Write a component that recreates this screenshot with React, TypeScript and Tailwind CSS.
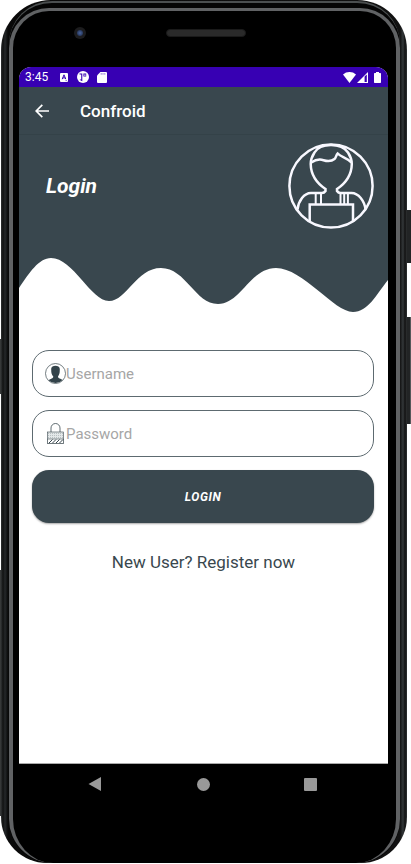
import React from "react";

function StatusBar() {
  return (
    <div className="flex h-5 items-center justify-between bg-[#3700b3] px-[6px] text-white">
      <div className="flex items-center">
        <span className="w-[35px] text-[12px] leading-5">3:45</span>
        <svg className="h-[9px] w-[8px]" viewBox="0 0 8 9" aria-hidden="true">
          <rect width="8" height="9" rx="1" fill="#fff" />
          <path d="M2.2 6.2 4 1.8l1.8 4.4M2.8 4.9h2.4" fill="none" stroke="#3700b3" strokeWidth="1" />
          <path d="M5.6 7.6h1.2" stroke="#3700b3" strokeWidth=".7" />
        </svg>
        <svg className="ml-[9px] size-3" viewBox="0 0 12 12" aria-hidden="true">
          <circle cx="6" cy="6" r="6" fill="#fff" />
          <path d="M2.500 2.600H5.300V10.200A4.600 4.600 0 0 1 2.500 8ZM6.400 2.600H9.200V5.600H6.400Z" fill="#3700b3" />
          <path d="M2 3.500h2.200v5H2z" fill="#fff" />
          <path d="M7.300 3.400h1.200v1.400H7.300z" fill="#fff" />
        </svg>
        <svg className="ml-2 h-[11px] w-[10px]" viewBox="0 0 10 11" aria-hidden="true">
          <path d="M3.4 0H9a1 1 0 0 1 1 1v9a1 1 0 0 1-1 1H1a1 1 0 0 1-1-1V3.4z" fill="#fff" />
          <path d="M4.2 1.2v1.4M6 1.2v1.4M7.8 1.2v1.4" stroke="#3700b3" strokeWidth=".6" />
        </svg>
      </div>
      <div className="flex items-center pr-px">
        <svg className="h-[11px] w-[13px]" viewBox="0 0 13 11" aria-hidden="true">
          <path d="M0 2.4a10 10 0 0 1 13 0L6.5 11z" fill="#fff" />
        </svg>
        <svg className="ml-px h-[11px] w-[11px]" viewBox="0 0 11 11" aria-hidden="true">
          <path d="M0 11 11 0v11z" fill="#fff" />
          <path d="M7.6 4.6 9.8 2.4v7.5H7.6z" fill="#3700b3" />
        </svg>
        <svg className="ml-[6px] h-[11px] w-[7px]" viewBox="0 0 7 11" aria-hidden="true">
          <path d="M2 0h3v1h1.3q.7 0 .7.7v8.6q0 .7-.7.7H.7Q0 11 0 10.300V1.700Q0 1 .7 1H2z" fill="#fff" />
        </svg>
      </div>
    </div>
  );
}

function AppBar() {
  return (
    <header className="flex h-12 items-center border-b border-[#344248] px-4 text-white">
      <button type="button" aria-label="Back" className="mr-[31px]">
        <svg className="size-[14px]" viewBox="0 0 14 14" fill="none" stroke="#fff" strokeWidth="1.7" aria-hidden="true">
          <path d="M14 7H1.500M7.300 .8 1.200 7l6.100 6.200" />
        </svg>
      </button>
      <h1 className="text-[17px] font-medium leading-6">Confroid</h1>
    </header>
  );
}

function Avatar() {
  return (
    <svg className="size-[86px]" viewBox="0 0 86 86" fill="none" stroke="#f8f8ff" strokeWidth="2.500" aria-hidden="true">
      <circle cx="43" cy="43" r="41.600" />
      <path d="M43 2C34 2 29 5 26.500 9.500C23.500 14 22.700 17 22.700 21C22.900 31 28.500 40 37.500 46V48C36.500 49.500 35.500 50 34 50H23C16 50 10.500 58 9.500 66.500" />
      <path d="M43 2C52 2 57 5 60 9.500C63 14 63.800 17 63.800 21C63.600 31 58 40 49 46V48C50 49.500 51 50 52.500 50H63.500C70.500 50 76.500 58 77.500 66.500" />
      <path d="M23.300 19.500C27 17 31 15.800 35.500 17.200C40 18.600 44 18 46.500 16C48.300 14.500 48 12 49.700 10.500C53.500 14.500 58.500 14.500 63.300 19.500" />
      <path d="M27.700 50v11M33 50v11M52.500 50v11M56.200 50v11M59.900 50v11" strokeWidth="2" />
      <path d="M21.700 78.500V61.500H65v17" />
    </svg>
  );
}

function Wave() {
  return (
    <svg className="block h-[84px] w-full" viewBox="0 0 369 84" preserveAspectRatio="none" aria-hidden="true">
      <path
        d="M0 0H369V51C357 66 349 83 334 83C315 83 284 39 257 39C231 39 222 75 199 75C176 75 167 39 142 39C117 39 108 72 90 72C72 72 54 29 32 29C20 29 10 44 0 59Z"
        fill="#39474e"
      />
    </svg>
  );
}

function PersonIcon() {
  return (
    <svg className="size-[21px] shrink-0" viewBox="0 0 21 21" aria-hidden="true">
      <circle cx="10.500" cy="10.500" r="10" fill="#fff" stroke="#39474e" strokeWidth=".7" />
      <path d="M6.200 6C6 1.600 14.800 1.600 14.800 6L14.700 9C14.500 11.500 13.500 12.500 13 13.500C13 15.500 16 15.700 17.600 17A9.800 9.800 0 0 1 3.600 17.300C5.500 15.700 8.300 15.500 8.300 13.500C7.500 12.500 6.500 11.500 6.300 9Z" fill="#33434a" />
    </svg>
  );
}

function LockIcon() {
  return (
    <svg className="mx-[2px] h-[21px] w-[17px] shrink-0" viewBox="0 0 17 21" fill="none" stroke="#39474e" strokeWidth=".6" aria-hidden="true">
      <path d="M4 9V5a4.500 4.500 0 0 1 9 0v4" strokeWidth=".8" />
      <rect x=".5" y="9" width="16" height="11.500" fill="#e4e8e9" />
      <path d="M1 10.500h15M1 12.500h15M1 14.500h15" stroke="#9aa4a8" strokeDasharray="1 1" />
      <path d="M.5 16h16v4.500H.5z" fill="#fff" />
      <path d="M2 20l3.500-3.500M5.500 20l3.500-3.500M9 20l3.500-3.500M12.500 20l3.500-3.500" strokeWidth="1" />
    </svg>
  );
}

type FieldProps = { id: string; label: string; type: string; icon: React.ReactNode };

function Field({ id, label, type, icon }: FieldProps) {
  return (
    <div className="flex h-[47px] items-center rounded-[17px] border border-[#5d6a70] bg-white px-3">
      <label htmlFor={id} aria-label={label}>{icon}</label>
      <input
        id={id}
        type={type}
        placeholder={label}
        className="min-w-0 flex-1 bg-transparent text-[15px] leading-5 text-[#39474e] outline-none placeholder:text-[#a6a6a6]"
      />
    </div>
  );
}

function NavBar() {
  return (
    <nav className="flex h-[41px] items-center justify-between border-t border-[#aaa] bg-black pl-[69px] pr-[71px]">
      <button type="button" aria-label="Back">
        <svg className="size-[14px]" viewBox="0 0 14 14" aria-hidden="true">
          <path d="M13 0v14L.5 7z" fill="#999" />
        </svg>
      </button>
      <button type="button" aria-label="Home" className="size-[13px] rounded-full bg-[#999]" />
      <button type="button" aria-label="Recent apps" className="size-[13px] rounded-[1px] bg-[#999]" />
    </nav>
  );
}

export default function App() {
  return (
    <div className="relative flex min-h-screen flex-col bg-white pb-px pl-px pr-1 font-[Roboto,sans-serif]">
      <div className="absolute left-0 top-[339px] h-[55px] w-1 bg-[#363838]" />
      <div className="absolute left-0 top-[570px] h-[246px] w-1 bg-[#363838]" />
      <div className="absolute right-0 top-[210px] h-[53px] w-2 bg-[#222425]" />
      <div className="absolute right-0 top-[317px] h-[107px] w-2 border-r border-[#55585a] bg-[#222425]" />

      <div className="relative flex flex-1 flex-col rounded-[50px] rounded-b-[46px] bg-[linear-gradient(90deg,#303334_0px,#111_2px,#25282a_4px,#090909_7px,#111_calc(100%-7px),#34383a_calc(100%-4px),#111_calc(100%-2px),#303334_100%)] pl-2 pr-[7px] pt-px">
        <div className="flex flex-1 flex-col rounded-t-[43px] rounded-b-[42px] border-t-2 border-[#4b4f50] bg-[#050505] pt-[5px]">
          <div className="flex flex-1 flex-col rounded-t-[40px] rounded-b-[44px] border-x-4 border-t-3 border-x-[#606264] border-t-[#606264] bg-black pl-[6px] pr-2">
            <div className="grid h-14 grid-cols-[1fr_auto_1fr] items-start pl-1 pt-4">
              <div className="ml-[51px] flex size-3 items-center justify-center rounded-full bg-[#1c1c1e]">
                <div className="size-[6px] rounded-full bg-[radial-gradient(#49649c,#18233f)]" />
              </div>
              <div className="mt-[2px] h-2 w-20 rounded-sm border border-[#1a1a1a] bg-[#2a2a2a]" />
            </div>

            <main className="flex flex-1 flex-col overflow-hidden rounded-t-xl bg-white">
              <StatusBar />
              <div className="bg-[#39474e]">
                <AppBar />
                <section className="flex items-center justify-between pl-[27px] pr-[14px] pt-2">
                  <h2 className="text-[21px] font-bold italic leading-7 text-white">Login</h2>
                  <Avatar />
                </section>
              </div>
              <Wave />
              <form className="flex flex-col gap-[13px] pl-[13px] pr-[14px] pt-[37px]" onSubmit={(e) => e.preventDefault()}>
                <Field id="username" label="Username" type="text" icon={<PersonIcon />} />
                <Field id="password" label="Password" type="password" icon={<LockIcon />} />
                <button
                  type="submit"
                  className="h-[53px] rounded-[17px] bg-[#39474e] text-[12px] font-bold italic tracking-wider text-white shadow-[0_1px_2px_rgba(0,0,0,0.35)]"
                >
                  LOGIN
                </button>
              </form>
              <a href="#register" className="mt-[27px] self-center text-[17px] leading-6 text-[#39474e]">
                New User? Register now
              </a>
            </main>
            <NavBar />
            <div className="h-[59px]" />
          </div>
        </div>
      </div>
    </div>
  );
}
